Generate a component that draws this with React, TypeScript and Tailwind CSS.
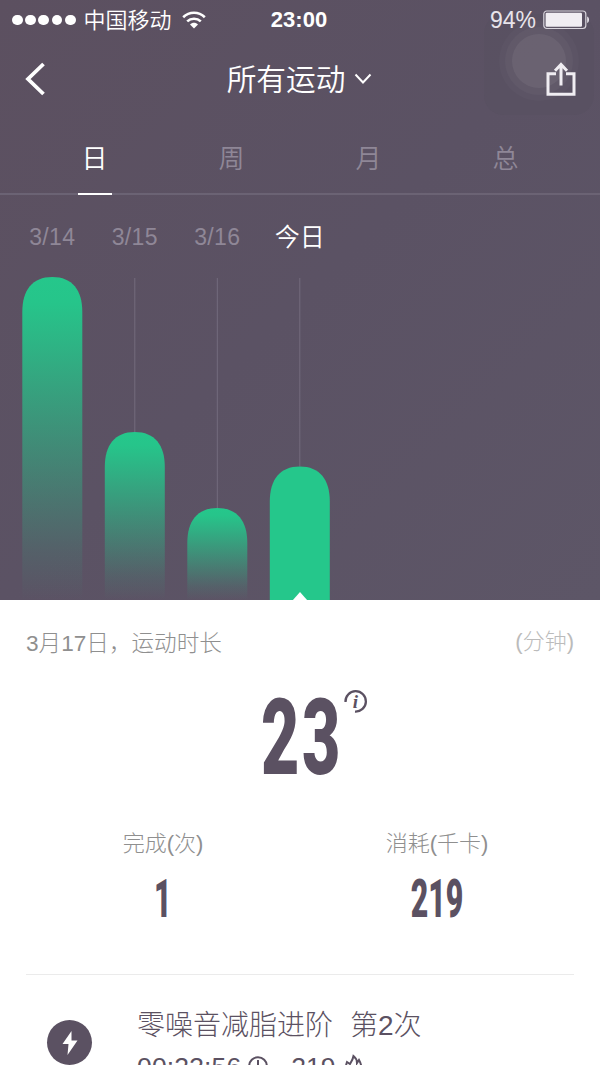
interface DayBar {
  label: string;
  top: number;
  active?: boolean;
}

const tabs = ["日", "周", "月", "总"];

const days: DayBar[] = [
  { label: "3/14", top: 0 },
  { label: "3/15", top: 155 },
  { label: "3/16", top: 231 },
  { label: "今日", top: 189.5, active: true },
];

const CHART_HEIGHT = 323;

function StatusBar() {
  return (
    <div className="grid h-10 grid-cols-[1fr_60px_1fr] items-center pr-[10px] pl-3 text-white">
      <div className="flex items-center">
        <div className="flex gap-[2.4px]">
          {[0, 1, 2, 3, 4].map((dot) => (
            <span key={dot} className="size-[10.8px] rounded-full bg-white" />
          ))}
        </div>
        <span className="mt-px ml-[8px] text-[22px] leading-none font-[350] whitespace-nowrap">
          中国移动
        </span>
        <svg className="ml-[10px]" width="24" height="19" viewBox="0 0 24 19">
          <path
            d="M1.2 6.2C7.3.3 16.7.3 22.8 6.2M5.2 10.4C9 6.8 15 6.8 18.8 10.4"
            fill="none"
            stroke="white"
            strokeWidth="2.6"
          />
          <path d="M8 13.4C10.3 11.2 13.7 11.2 16 13.4L12 17.4Z" fill="white" />
        </svg>
      </div>
      <span className="-ml-1 text-center text-[22px] leading-none font-bold">
        23:00
      </span>
      <div className="flex items-center justify-end">
        <span className="text-[23px] leading-none text-[#e8e4eb]">94%</span>
        <svg className="ml-[7px]" width="47" height="20" viewBox="0 0 47 20">
          <rect
            x="0.8"
            y="1"
            width="42"
            height="17.5"
            rx="3"
            fill="none"
            stroke="#d8d4dc"
            strokeWidth="1.2"
          />
          <rect x="2.6" y="2.8" width="36.4" height="14" rx="1.2" fill="#f0edf2" />
          <path d="M44.2 6.5C46.6 7.5 46.6 12 44.2 13Z" fill="#e8e4eb" />
        </svg>
      </div>
    </div>
  );
}

function AssistiveTouch() {
  return (
    <div className="absolute top-[14px] left-[484px] flex h-[101px] w-[110px] items-center justify-center rounded-[20px] bg-[#565060]/45">
      <div className="mt-[-7px] flex size-[80px] items-center justify-center rounded-full bg-white/[0.02]">
        <div className="flex size-[68px] items-center justify-center rounded-full bg-white/[0.03]">
          <div className="size-[54px] rounded-full bg-white/[0.06]" />
        </div>
      </div>
    </div>
  );
}

function NavBar() {
  return (
    <div className="flex h-[78px] items-center justify-between pr-6 pl-[25px] text-white">
      <svg width="24" height="36" viewBox="0 0 24 36">
        <path
          d="M18.5 3L3 18L18.5 33"
          fill="none"
          stroke="white"
          strokeWidth="3.8"
        />
      </svg>
      <div className="mt-px ml-1 flex items-center gap-[9px]">
        <span className="text-[29.7px] leading-none font-[350]">所有运动</span>
        <svg width="18" height="12" viewBox="0 0 18 12">
          <path
            d="M1.5 1.5L9 9.5L16.5 1.5"
            fill="none"
            stroke="white"
            strokeWidth="2"
          />
        </svg>
      </div>
      <svg width="30" height="36" viewBox="0 0 30 36">
        <path
          d="M10 12.7H2V33.2H28V12.7H20M15 24.5V4M9 9.7L15 3.5L21 9.7"
          fill="none"
          stroke="#f0edf2"
          strokeWidth="3"
        />
      </svg>
    </div>
  );
}

function Tabs() {
  return (
    <div className="h-[77px] border-b-2 border-[#6b6374] px-[26px]">
      <div className="grid grid-cols-4">
        {tabs.map((tab, index) => (
          <div key={tab} className="flex justify-center">
            <div
              className={`flex h-[77px] w-[34px] justify-center pt-[28px] text-[26px] leading-none font-[350] ${
                index === 0
                  ? "border-b-2 border-white text-white"
                  : "text-[#8f8797]"
              }`}
            >
              {tab}
            </div>
          </div>
        ))}
      </div>
    </div>
  );
}

function BarChart() {
  return (
    <div>
      <div className="ml-[11px] flex h-[82px] items-center pt-0.5">
        {days.map((day) => (
          <span
            key={day.label}
            className={`w-[82.5px] text-center leading-none font-[350] ${
              day.active
                ? "text-[25px] text-white"
                : "text-[23px] tracking-[0.3px] text-[#8f8797]"
            }`}
          >
            {day.label}
          </span>
        ))}
      </div>
      <svg
        className="block"
        width="600"
        height={CHART_HEIGHT}
        viewBox={`0 0 600 ${CHART_HEIGHT}`}
      >
        <defs>
          <linearGradient id="bar-fade" x1="0" y1="0" x2="0" y2="1">
            <stop offset="0" stopColor="#25c78b" />
            <stop offset="0.08" stopColor="#25c78b" stopOpacity="0.98" />
            <stop offset="0.85" stopColor="#25c78b" stopOpacity="0.12" />
            <stop offset="1" stopColor="#25c78b" stopOpacity="0" />
          </linearGradient>
        </defs>
        {days.map((day, index) => {
          const x = 22.3 + index * 82.5;
          return (
            <g key={day.label}>
              <path
                d={`M${x + 30} 1V${day.top}`}
                stroke="#746c7d"
                strokeWidth="1"
              />
              <path
                d={`M${x} ${CHART_HEIGHT}V${day.top + 35}c0 -22 10 -35 30 -35s30 13 30 35V${CHART_HEIGHT}Z`}
                fill={day.active ? "#25c78b" : "url(#bar-fade)"}
              />
            </g>
          );
        })}
        <path d="M292.5 323.5L300 315L307.5 323.5Z" fill="white" />
      </svg>
    </div>
  );
}

function Stat({ label, value }: { label: string; value: string }) {
  return (
    <div className="flex flex-col items-center">
      <span className="text-[22px] leading-[34px] font-light text-[#8f8f8f]">
        {label}
      </span>
      <span className="mt-[6px] block origin-center scale-x-[0.56] font-['Roboto'] text-[54px] leading-[64px] font-black text-[#5b5162]">
        {value}
      </span>
    </div>
  );
}

function Summary() {
  return (
    <div className="h-[375px] border-b border-[#ebebeb]">
      <div className="flex h-[84px] items-center justify-between font-light">
        <span className="pt-[3px] text-[22.6px] text-[#8f8f8f]">
          3月17日，运动时长
        </span>
        <span className="pb-0.5 text-[22px] text-[#bbb]">(分钟)</span>
      </div>
      <div className="relative flex h-[124px] justify-center">
        <span className="block scale-x-[0.63] pl-[5px] font-['Roboto'] text-[105px] leading-[110px] font-black tracking-[4px] text-[#5b5162]">
          23
        </span>
        <svg
          className="absolute top-[5px] left-[317px]"
          width="26"
          height="26"
          viewBox="0 0 26 26"
        >
          <path
            d="M2.5 13A10.2 10.2 0 1 1 12 22.6"
            fill="none"
            stroke="#5b5162"
            strokeWidth="2.3"
          />
          <text
            x="12.5"
            y="18.5"
            textAnchor="middle"
            fill="#5b5162"
            className="font-['Liberation_Serif'] text-[19px] font-bold italic"
          >
            i
          </text>
        </svg>
      </div>
      <div className="grid grid-cols-2 pt-[19px]">
        <Stat label="完成(次)" value="1" />
        <Stat label="消耗(千卡)" value="219" />
      </div>
    </div>
  );
}

function WorkoutRow() {
  return (
    <div className="flex pt-[30px] pl-[21px] font-light text-[#5b5162]">
      <div className="mt-[15px] flex size-[45px] shrink-0 items-center justify-center rounded-full bg-[#5b5162]">
        <svg width="18" height="26" viewBox="0 0 18 26">
          <path d="M10.5 1L1.5 14H7.5L6.5 25L16.5 10.5H10.5Z" fill="white" />
        </svg>
      </div>
      <div className="ml-[45px]">
        <div className="flex gap-[17px] pt-0.5 text-[28px] leading-[38px] whitespace-nowrap">
          <span>零噪音减脂进阶</span>
          <span>第2次</span>
        </div>
        <div className="mt-[7px] flex items-start text-[26.5px] leading-[30px]">
          <span className="tracking-[0.15px]">00:23:56</span>
          <svg
            className="mt-[4px] ml-[7px]"
            width="20"
            height="20"
            viewBox="0 0 20 20"
            fill="none"
            stroke="#5b5162"
            strokeWidth="2"
          >
            <circle cx="10" cy="10" r="8.8" />
            <path d="M10 4V11H15" />
          </svg>
          <span className="ml-[23px]">219</span>
          <svg
            className="mt-[2px] ml-[9px]"
            width="18"
            height="22"
            viewBox="0 0 18 22"
            fill="none"
            stroke="#5b5162"
            strokeWidth="2"
          >
            <path d="M2 8L5 10C7 7 8 5 8.5 2C11 4 12 6 12 9L14 6C18 13 17 20 9 20C1 20 0 13 2 8Z" />
          </svg>
        </div>
      </div>
    </div>
  );
}

export default function App() {
  return (
    <div className="h-[1065px] w-[600px] overflow-hidden bg-white font-['Liberation_Sans','Noto_Sans_CJK_SC',sans-serif]">
      <header className="relative h-[600px] bg-linear-to-br from-[#5c5060] via-[#5b5264] to-[#5d5667]">
        <AssistiveTouch />
        <div className="relative">
          <StatusBar />
          <NavBar />
          <Tabs />
          <BarChart />
        </div>
      </header>
      <main className="px-[26px]">
        <Summary />
        <WorkoutRow />
      </main>
    </div>
  );
}
